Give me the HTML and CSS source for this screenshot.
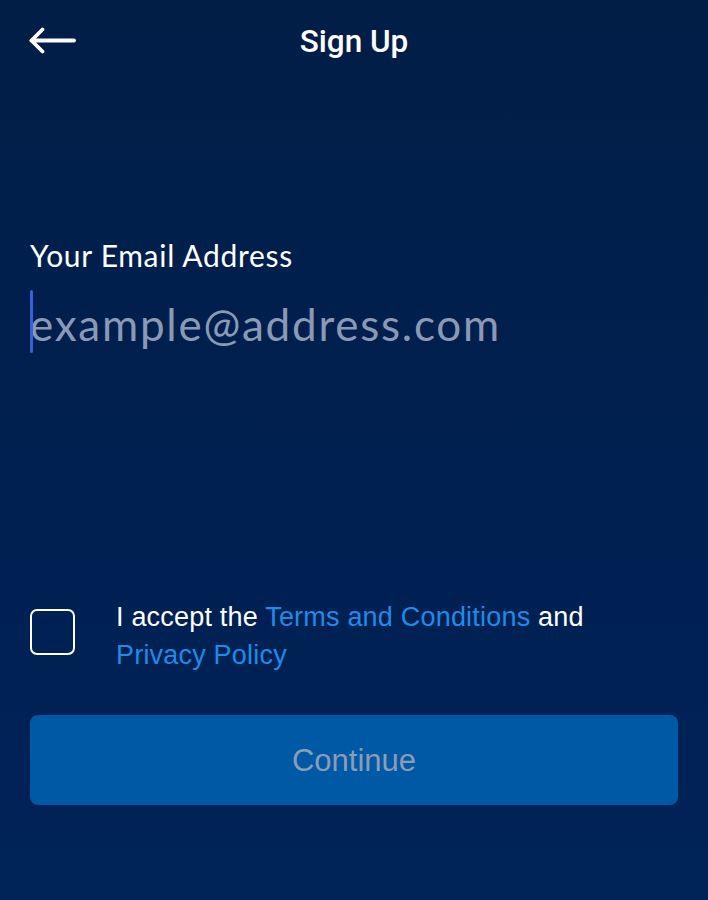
FILE: index.html
```html
<!DOCTYPE html>
<html lang="en">
<head>
<meta charset="utf-8">
<title>Sign Up</title>
<link rel="stylesheet" href="styles.css">
</head>
<body>
<div class="screen">
  <header class="topbar">
    <button class="back" aria-label="Back">
      <svg width="48" height="28" viewBox="0 0 48 28" fill="none" stroke="#ffffff" stroke-width="3.8" stroke-linecap="round" stroke-linejoin="round">
        <path d="M2.5 13.5 H45"/>
        <path d="M13.5 2.5 L2.5 13.5 L13.5 24.5"/>
      </svg>
    </button>
    <h1 class="title">Sign Up</h1>
  </header>

  <section class="field">
    <label class="label" for="email">Your Email Address</label>
    <div class="input-row">
      <span class="caret"></span>
      <span class="placeholder">example@address.com</span>
    </div>
  </section>

  <div class="spacer"></div>

  <section class="terms">
    <span class="checkbox"></span>
    <p class="terms-text">I accept the <a class="link">Terms and Conditions</a> and <a class="link">Privacy Policy</a></p>
  </section>

  <button class="continue">Continue</button>
</div>
</body>
</html>
```

FILE: styles.css
```css
html, body {
  margin: 0;
  padding: 0;
}
body {
  background: linear-gradient(180deg, #001e46 0%, #002052 60%, #002358 100%);
  min-height: 900px;
  font-family: "Liberation Sans", Arial, sans-serif;
  color: #ffffff;
}
.screen {
  width: 708px;
  height: 900px;
  display: flex;
  flex-direction: column;
  padding: 0 30px;
  box-sizing: border-box;
}
.topbar {
  position: relative;
  height: 84px;
  display: flex;
  align-items: center;
  justify-content: center;
}
.back {
  position: absolute;
  left: -1px;
  top: 27px;
  background: none;
  border: 0;
  padding: 0;
  line-height: 0;
}
.title {
  margin: 0;
  margin-top: -1px;
  font-family: "Roboto", "Liberation Sans", sans-serif;
  font-weight: 500;
  font-size: 31.5px;
  color: #ffffff;
}
.field {
  margin-top: 154px;
}
.label {
  display: block;
  font-family: "Lato", "Liberation Sans", sans-serif;
  font-size: 30px;
  font-weight: 400;
  letter-spacing: 0.7px;
  line-height: 34px;
  color: #ffffff;
}
.input-row {
  position: relative;
  margin-top: 18px;
  height: 63px;
  display: flex;
  align-items: center;
}
.caret {
  position: absolute;
  left: 0;
  top: 0;
  width: 3px;
  height: 63px;
  border-radius: 2px;
  background: #3b5fd8;
}
.placeholder {
  font-family: "Lato", "Liberation Sans", sans-serif;
  font-size: 44px;
  letter-spacing: 1.75px;
  color: #8a9ab6;
  margin-top: 4px;
}
.spacer {
  flex: 0 0 252px;
}
.terms {
  display: flex;
  align-items: flex-start;
  gap: 41px;
}
.checkbox {
  flex: 0 0 auto;
  width: 41px;
  height: 42px;
  border: 2px solid #ffffff;
  border-radius: 7px;
  margin-top: 4px;
}
.terms-text {
  margin: 0;
  font-family: "Liberation Sans", Arial, sans-serif;
  font-size: 27px;
  letter-spacing: 0.2px;
  line-height: 38px;
  color: #ffffff;
  margin-top: -7px;
}
.link {
  color: #1f8be6;
}
.continue {
  margin-top: 41px;
  height: 90px;
  width: 100%;
  border: 0;
  border-radius: 8px;
  background: #0059a5;
  color: #8b9db6;
  font-family: "Liberation Sans", Arial, sans-serif;
  font-size: 31px;
  font-weight: 400;
  padding-top: 2px;
}
```
